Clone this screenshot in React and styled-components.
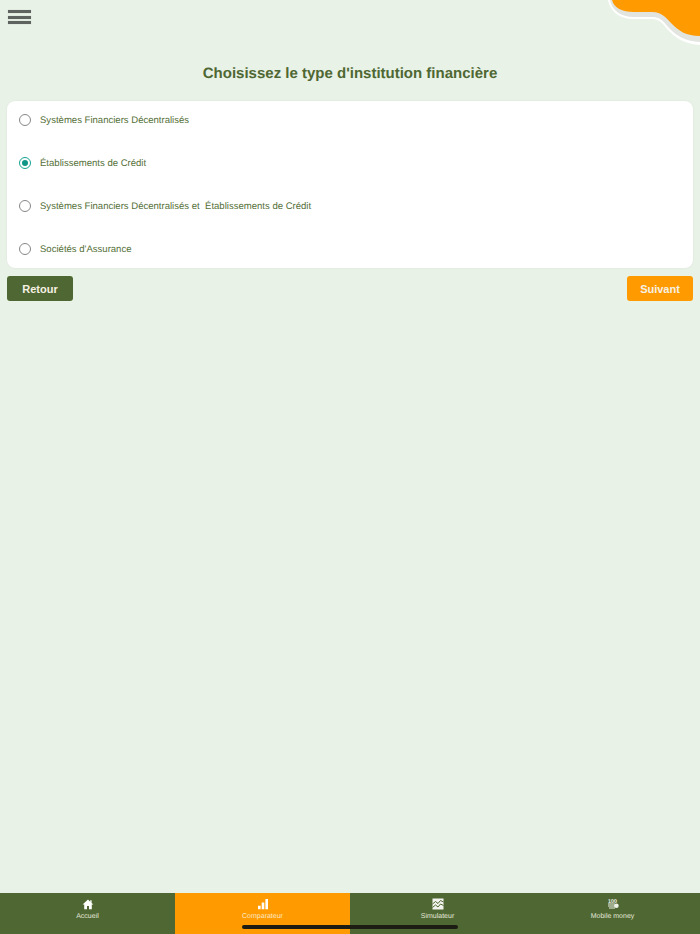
import { useState } from 'react';
import styled, { createGlobalStyle } from 'styled-components';

const GREEN = '#4f6732';
const ORANGE = '#ff9a00';

const Global = createGlobalStyle`
  html, body { margin: 0; padding: 0; }
  body {
    background: #e8f2e7;
    font-family: "Liberation Sans", Arial, sans-serif;
    text-rendering: geometricPrecision;
  }
`;

const Page = styled.div`
  position: relative;
  display: flex;
  flex-direction: column;
  width: 700px;
  height: 934px;
  overflow: hidden;
  background: #e8f2e7;
`;

const Header = styled.header`
  height: 64px;
  padding: 10px 0 0 8px;
  box-sizing: border-box;
`;

const MenuButton = styled.button`
  display: flex;
  flex-direction: column;
  gap: 2.500px;
  width: 23px;
  padding: 0;
  border: none;
  background: none;
  span {
    display: block;
    height: 3px;
    background: #5f6360;
    box-shadow: 0 0 1px rgba(95, 99, 96, 0.5);
  }
`;

const Corner = styled.svg`
  position: absolute;
  top: 0;
  right: 0;
`;

const Main = styled.main`
  flex: 1;
  padding: 0 7px;
`;

const Title = styled.h1`
  margin: 0 0 17px;
  font-size: 15px;
  line-height: 20px;
  font-weight: 700;
  text-align: center;
  color: ${GREEN};
`;

const Card = styled.div`
  display: flex;
  flex-direction: column;
  gap: 7px;
  height: 167px;
  border-radius: 8px;
  background: #fff;
  box-shadow: 0 0 2px rgba(0, 0, 0, 0.08);
`;

const Row = styled.label`
  display: flex;
  align-items: center;
  gap: 9px;
  height: 36px;
  padding: 1px 0 0 12px;
  box-sizing: border-box;
  font-size: 9.550px;
  color: #557038;
  white-space: pre;
`;

const RowText = styled.span`
  padding-top: 1px;
`;

const Radio = styled.span`
  display: flex;
  align-items: center;
  justify-content: center;
  width: 12px;
  height: 12px;
  box-sizing: border-box;
  border-radius: 50%;
  border: 1px solid ${p => (p.$on ? '#16a394' : '#85878a')};
  &::after {
    content: '';
    display: ${p => (p.$on ? 'block' : 'none')};
    width: 6px;
    height: 6px;
    border-radius: 50%;
    background: #0f9686;
  }
`;

const Actions = styled.div`
  display: flex;
  justify-content: space-between;
  margin-top: 8px;
`;

const Button = styled.button`
  width: 66px;
  height: 25px;
  padding: 0;
  border: none;
  border-radius: 3px;
  background: ${p => (p.$primary ? ORANGE : GREEN)};
  color: #f6f1e4;
  font-family: inherit;
  font-size: 11px;
  font-weight: 700;
`;

const TabBar = styled.nav`
  display: grid;
  grid-template-columns: repeat(4, 1fr);
  height: 41px;
  background: ${GREEN};
`;

const Tab = styled.div`
  display: flex;
  flex-direction: column;
  align-items: center;
  padding-top: 5px;
  box-sizing: border-box;
  background: ${p => (p.$active ? ORANGE : 'transparent')};
  color: ${p => (p.$active ? '#fde7c4' : '#e4e8dc')};
  font-size: 7px;
  line-height: 9px;
  svg { display: block; margin-bottom: 2px; }
`;

const HomeIndicator = styled.div`
  position: absolute;
  left: 242px;
  bottom: 5px;
  width: 216px;
  height: 4px;
  border-radius: 2px;
  background: #1c1c14;
`;

const options = [
  'Systèmes Financiers Décentralisés',
  'Établissements de Crédit',
  'Systèmes Financiers Décentralisés et  Établissements de Crédit',
  "Sociétés d'Assurance",
];

const HomeIcon = () => (
  <svg width="12" height="12" viewBox="0 0 12 12" fill="#fff">
    <path d="M6 1.500 .6 6.500h1.600v4.800h2.800V8h2v3.300h2.800V6.500h1.600L9.600 5V2.300H8.200v1.500z" />
  </svg>
);

const BarsIcon = () => (
  <svg width="12" height="12" viewBox="0 0 12 12" fill="#fff">
    <path d="M1 7.800h2.600v3.500H1zM4.700 4.600h2.600v6.700H4.700zM8.400 1h2.600v10.300H8.400z" />
  </svg>
);

const ChartIcon = () => (
  <svg width="12" height="12" viewBox="0 0 12 12">
    <rect x=".5" y=".5" width="11" height="11" fill="#f2f3ee" />
    <path d="M.5 6 3.500 3.500l2.500 2 2.500-3 3 1.500M.5 9.500l3-2.500 2.500 2 2.500-3 3 1.500" fill="none" stroke={GREEN} strokeWidth="1" />
  </svg>
);

const MoneyIcon = () => (
  <svg width="12" height="12" viewBox="0 0 12 12" fill="#f0f2ea">
    <text x="1" y="4.500" fontSize="5.500" fontFamily="Liberation Sans, sans-serif" fontWeight="700">100</text>
    <rect x="1" y="5.500" width="7" height="1" />
    <rect x="1" y="7.500" width="7" height="1" />
    <rect x="2" y="9.500" width="6" height="1" />
    <circle cx="9.400" cy="7.800" r="2.300" />
  </svg>
);

export default function App() {
  const [selected, setSelected] = useState(1);

  return (
    <Page>
      <Global />
      <Header>
        <MenuButton aria-label="Menu">
          <span />
          <span />
          <span />
        </MenuButton>
      </Header>
      <Corner width="96" height="48" viewBox="0 0 96 48">
        <path d="M4 0C6 11 15 19 30 19H48C57 19 60 26 66 32C73 39 82 44 96 45V0Z" fill="#fff" />
        <path d="M6 0C8 10 16 17 30 17H48C58 17 60 23 66 29C73 36 82 41.500 96 42V0Z" fill="#e2e4e0" />
        <path d="M8 0C10 8 18 12 30 12H48C58 12 62 18 68 24C75 31 82 36 96 36V0Z" fill={ORANGE} />
      </Corner>
      <Main>
        <Title>Choisissez le type d'institution financière</Title>
        <Card>
          {options.map((label, i) => (
            <Row key={label} onClick={() => setSelected(i)}>
              <Radio $on={selected === i} />
              <RowText>{label}</RowText>
            </Row>
          ))}
        </Card>
        <Actions>
          <Button>Retour</Button>
          <Button $primary>Suivant</Button>
        </Actions>
      </Main>
      <TabBar>
        <Tab><HomeIcon />Accueil</Tab>
        <Tab $active><BarsIcon />Comparateur</Tab>
        <Tab><ChartIcon />Simulateur</Tab>
        <Tab><MoneyIcon />Mobile money</Tab>
      </TabBar>
      <HomeIndicator />
    </Page>
  );
}
